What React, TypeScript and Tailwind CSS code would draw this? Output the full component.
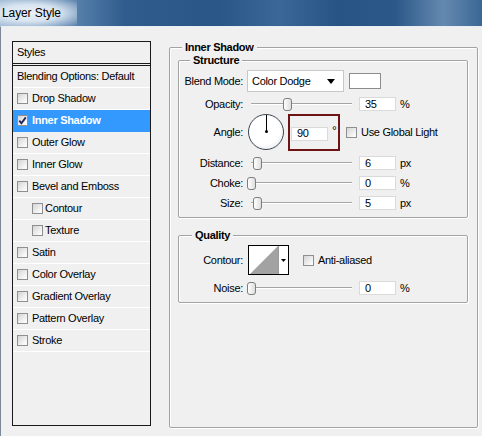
import React from "react";

const Check = ({ checked = false }: { checked?: boolean }) => (
  <span className="w-[11px] h-[11px] shrink-0 border border-[#8e8f8f] bg-[linear-gradient(135deg,#d4d4d4_0%,#f4f4f4_70%,#ffffff_100%)] flex items-center justify-center">
    {checked && (
      <svg width="9" height="9" viewBox="0 0 9 9">
        <path d="M1.3 4.6 L3.4 7.2 L7.8 1.4" fill="none" stroke="#21215a" strokeWidth="1.8" />
      </svg>
    )}
  </span>
);

const thumbLeft: Record<number, string> = {
  0: "left-[0px]",
  6: "left-[6px]",
  36: "left-[36px]",
};

const Slider = ({ pos }: { pos: number }) => (
  <div className="relative w-[109px] h-[16px] shrink-0">
    <div className="absolute left-[4px] right-[4px] top-[7px] h-0 border-t border-b border-t-[#a5a5a5] border-b-white" />
    <div
      className={`absolute ${thumbLeft[pos]} top-[2px] w-[9px] h-[13px] rounded-[3px] border border-[#7d7d7d] bg-[linear-gradient(to_right,#ffffff,#dedede)]`}
    />
  </div>
);

const Input = ({ value }: { value: string }) => (
  <div className="w-[37px] h-[14px] shrink-0 bg-white border border-[#dadada] pl-[5px] flex items-center leading-none">
    {value}
  </div>
);

const Label = ({ children }: { children: React.ReactNode }) => (
  <span className="w-[65px] shrink-0 text-right pr-[1px]">{children}</span>
);

const SliderRow = ({
  label,
  pos,
  value,
  unit,
  mt,
}: {
  label: string;
  pos: number;
  value: string;
  unit: string;
  mt: string;
}) => (
  <div className={`flex items-center h-[16px] ${mt}`}>
    <Label>{label}</Label>
    <div className="ml-[3px]">
      <Slider pos={pos} />
    </div>
    <div className="ml-[3px]">
      <Input value={value} />
    </div>
    <span className="ml-[4px]">{unit}</span>
  </div>
);

const StyleRow = ({
  label,
  indent = false,
  checked = false,
  active = false,
}: {
  label: string;
  indent?: boolean;
  checked?: boolean;
  active?: boolean;
}) => (
  <div
    className={`h-[22px] shrink-0 flex items-center border-b ${
      active ? "bg-[#3399ff] text-white font-bold border-[#3399ff]" : "border-white"
    } ${indent ? "pl-[19px]" : "pl-[4px]"}`}
  >
    <Check checked={checked} />
    <span className={indent ? "ml-[2px]" : "ml-[4px]"}>{label}</span>
  </div>
);

export default function App() {
  return (
    <div className="w-[482px] h-[436px] overflow-hidden bg-[#f0f0f0] flex flex-col text-black text-[11px] tracking-[-0.3px] font-['Liberation_Sans',Arial,sans-serif]">
      {/* Title bar */}
      <div className="h-[26px] shrink-0 flex items-center bg-[linear-gradient(to_right,#8fadcb_0%,#5a82ad_15%,#2f5c8d_26%,#2a5687_45%,#3a6798_58%,#285485_70%,#2b5888_82%,#6489b0_92%,#3b6795_100%)]">
        <span className="pl-[2px] pr-[16px] h-[26px] flex items-center text-[12px] tracking-[-0.1px] bg-[radial-gradient(ellipse_at_40%_50%,rgba(238,244,250,0.97)_0%,rgba(226,236,246,0.9)_45%,rgba(200,218,236,0)_100%)]">
          Layer Style
        </span>
      </div>

      {/* Body */}
      <div className="flex-1 border-t border-[#e9eef3] border-l border-l-[#7c8896] flex pl-[11px] pt-[14px]">
        {/* Left styles list */}
        <div className="w-[139px] h-[385px] shrink-0 border border-[#1a1a1a] flex flex-col">
          <div className="h-[21px] shrink-0 flex items-center pl-[4px]">Styles</div>
          <div className="h-[3px] shrink-0 border-t border-b border-[#1a1a1a]" />
          <div className="h-[22px] shrink-0 flex items-center pl-[4px] border-b border-white">
            Blending Options: Default
          </div>
          <StyleRow label="Drop Shadow" />
          <StyleRow label="Inner Shadow" checked active />
          <StyleRow label="Outer Glow" />
          <StyleRow label="Inner Glow" />
          <StyleRow label="Bevel and Emboss" />
          <StyleRow label="Contour" indent />
          <StyleRow label="Texture" indent />
          <StyleRow label="Satin" />
          <StyleRow label="Color Overlay" />
          <StyleRow label="Gradient Overlay" />
          <StyleRow label="Pattern Overlay" />
          <StyleRow label="Stroke" />
        </div>

        {/* Right group */}
        <div className="relative ml-[18px] mt-[6px] w-[309px] h-[381px] shrink-0 border border-[#a3a3a3] rounded-[2px] shadow-[inset_1px_1px_0_#ffffff,1px_1px_0_#ffffff] flex flex-col">
          <span className="absolute -top-[8px] left-[12px] h-[14px] leading-[14px] px-[3px] bg-[#f0f0f0] font-bold">
            Inner Shadow
          </span>

          {/* Structure */}
          <div className="relative ml-[8px] mt-[12px] w-[290px] h-[158px] shrink-0 border border-[#a3a3a3] rounded-[2px] shadow-[inset_1px_1px_0_#ffffff,1px_1px_0_#ffffff] flex flex-col">
            <span className="absolute -top-[8px] left-[11px] h-[14px] leading-[14px] px-[3px] bg-[#f0f0f0] font-bold">
              Structure
            </span>

            {/* Blend mode */}
            <div className="flex items-center h-[22px] mt-[9px]">
              <Label>Blend Mode:</Label>
              <div className="ml-[3px] w-[97px] h-[22px] shrink-0 bg-white border border-[#c8c8c8] flex items-center pl-[4px] pr-[8px] justify-between">
                <span>Color Dodge</span>
                <svg width="8" height="5" viewBox="0 0 8 5">
                  <path d="M0 0 H8 L4 5 Z" fill="#000" />
                </svg>
              </div>
              <div className="ml-[5px] w-[32px] h-[16px] shrink-0 bg-white border border-[#8c8c8c]" />
            </div>

            <SliderRow label="Opacity:" pos={36} value="35" unit="%" mt="mt-[4px]" />

            {/* Angle */}
            <div className="flex items-center h-[38px] mt-[1px]">
              <Label>Angle:</Label>
              <div className="ml-[4px] w-[36px] h-[36px] shrink-0 rounded-full border-[1.5px] border-[#3b4452] bg-[radial-gradient(circle_at_45%_40%,#ffffff_0%,#ffffff_55%,#dfe4ea_100%)] flex flex-col items-center">
                <div className="w-px h-[16px] bg-black" />
                <div className="w-[3px] h-[3px] -mt-[1px] bg-black rounded-full" />
              </div>
              <div className="ml-[4px] w-[52px] h-[37px] shrink-0 border-2 border-[#6d1313] flex items-center pl-px pt-[3px]">
                <Input value="90" />
                <span className="ml-[4px] mb-[5px] leading-none text-[12px]">°</span>
              </div>
              <div className="ml-[6px]">
                <Check />
              </div>
              <span className="ml-[4px]">Use Global Light</span>
            </div>

            <SliderRow label="Distance:" pos={6} value="6" unit="px" mt="mt-[4px]" />
            <SliderRow label="Choke:" pos={0} value="0" unit="%" mt="mt-[4px]" />
            <SliderRow label="Size:" pos={6} value="5" unit="px" mt="mt-[4px]" />
          </div>

          {/* Quality */}
          <div className="relative ml-[8px] mt-[17px] w-[290px] h-[68px] shrink-0 border border-[#a3a3a3] rounded-[2px] shadow-[inset_1px_1px_0_#ffffff,1px_1px_0_#ffffff] flex flex-col">
            <span className="absolute -top-[8px] left-[13px] h-[14px] leading-[14px] px-[3px] bg-[#f0f0f0] font-bold">
              Quality
            </span>
            <div className="flex items-center h-[30px] mt-[9px]">
              <Label>Contour:</Label>
              <div className="ml-[4px] w-[41px] h-[30px] shrink-0 border border-black bg-white flex">
                <svg width="29" height="28" viewBox="0 0 29 28" className="shrink-0">
                  <path d="M1 28 L29 0 L29 28 Z" fill="#a2a2a2" />
                </svg>
                <div className="flex-1 border-l border-[#9a9a9a] flex items-center justify-center">
                  <svg width="5" height="3" viewBox="0 0 5 3">
                    <path d="M0 0 H5 L2.5 3 Z" fill="#000" />
                  </svg>
                </div>
              </div>
              <div className="ml-[14px]">
                <Check />
              </div>
              <span className="ml-[4px]">Anti-aliased</span>
            </div>
            <SliderRow label="Noise:" pos={0} value="0" unit="%" mt="mt-[5px]" />
          </div>
        </div>
      </div>
    </div>
  );
}
